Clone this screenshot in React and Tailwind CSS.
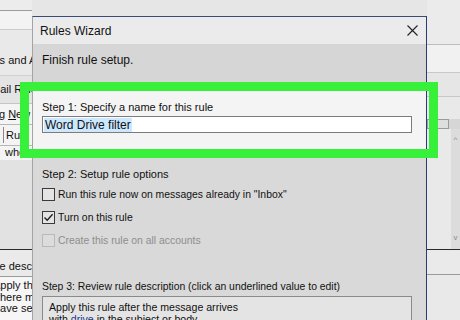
import React from "react";

const Check = ({ checked, disabled, label }) => (
  <div className="h-[23px] flex items-center gap-[3px]">
    <div
      className={`w-[13px] h-[13px] border flex items-center justify-center ${
        disabled ? "border-[#b9b9b9] bg-[#dcdcdc]" : "border-[#3a3a3a] bg-[#e4e4e4]"
      }`}
    >
      {checked && (
        <svg width="11" height="11" viewBox="0 0 11 11">
          <path d="M1.5 5.5 L4.2 8.3 L9.6 2.2" fill="none" stroke="#1a1a1a" strokeWidth="1.3" />
        </svg>
      )}
    </div>
    <span className={`text-[10.4px] ${disabled ? "text-[#8e8e8e]" : "text-[#111]"}`}>{label}</span>
  </div>
);

export default function App() {
  return (
    <div className="relative w-[460px] h-[320px] overflow-hidden flex items-start bg-[#e6e6e6] font-['Liberation_Sans',Arial,sans-serif] text-[11px] leading-[14px] text-[#111]">
      {/* Outlook window behind, left side */}
      <div className="w-[32px] h-[320px] shrink-0 flex flex-col overflow-hidden whitespace-nowrap">
        <div className="h-[11px] shrink-0 bg-[#ececec] border-b border-[#9c9c9c]" />
        <div className="h-[19px] shrink-0 bg-[#f3f3f3] border-b border-[#cdcdcd]" />
        <div className="h-[45px] shrink-0 bg-[#e9e9e9] pt-[23px] -ml-[23px]">Rules and Alerts</div>
        <div className="h-[28px] shrink-0 bg-[#e4e4e4] border-t border-[#d2d2d2] pt-[6px] -ml-[20px]">E-mail Rules</div>
        <div className="h-[21px] shrink-0 bg-[#f4f4f4] border-t border-[#c4c4c4] flex items-center">
          <span className="-ml-[1px]">g</span>
          <span className="ml-[3px]">
            <span className="underline">N</span>ew Rule
          </span>
        </div>
        <div className="h-[22px] shrink-0 bg-[#f4f4f4] border-y border-[#b8b8b8] flex items-center">
          <span className="ml-[3px] border-l border-[#888] h-[16px]" />
          <span className="ml-[2px]">Rule (a</span>
        </div>
        <div className="h-[14px] shrink-0 bg-[#f4f4f4] pl-[5px] leading-[12px]">when</div>
        <div className="h-[90px] shrink-0 bg-[#e2e2e2] border-b border-[#2a2a2a]" />
        <div className="h-[27px] shrink-0 bg-[#eaeaea] border-b border-[#9a9a9a] pt-[9px] -ml-[17px]">Rule description</div>
        <div className="flex-1 bg-[#f6f6f6] pt-[3px] leading-[11.5px]">
          <div className="-ml-[7px]">Apply this</div>
          <div className="-ml-[8px]">where m</div>
          <div className="-ml-[6px]">have sent</div>
        </div>
      </div>

      {/* Rules Wizard dialog */}
      <div className="w-[395px] h-[304px] shrink-0 mt-[16px] flex flex-col overflow-hidden bg-[#d9d9d9] border-l border-t border-r border-l-[#a4a4a4] border-t-[#3c4a78] border-r-[#2c3a72]">
        <div className="h-[27px] shrink-0 bg-[#ebebeb] flex items-center justify-between pl-[7px] pr-[8px] text-[12px]">
          <span>Rules Wizard</span>
          <svg width="11" height="11" viewBox="0 0 11 11">
            <path d="M0.5 0.5 L10.5 10.5 M10.5 0.5 L0.5 10.5" stroke="#222" strokeWidth="1.1" />
          </svg>
        </div>
        <div className="h-[38px] shrink-0 bg-[#d6d6d6] pl-[9px] pt-[9px] text-[12px]">Finish rule setup.</div>
        <div className="h-[76px] shrink-0 bg-[#f4f4f4] pl-[9px] pt-[18px]">
          <div>Step 1: Specify a name for this rule</div>
          <div className="mt-[2px] w-[370px] h-[17px] bg-white border border-[#7c7c7c] flex items-center px-[1px]">
            <span className="bg-[#cce8ff] px-[1px] leading-[14px] text-[12px]">Word Drive filter</span>
          </div>
        </div>
        <div className="shrink-0 pl-[9px] pt-[9px]">
          <div>Step 2: Setup rule options</div>
          <div className="mt-[2px]">
            <Check label={'Run this rule now on messages already in "Inbox"'} />
            <Check checked label="Turn on this rule" />
            <Check disabled label="Create this rule on all accounts" />
          </div>
          <div className="mt-[28px] text-[10.4px]">Step 3: Review rule description (click an underlined value to edit)</div>
          <div className="mt-[2px] w-[370px] h-[40px] bg-[#e4e4e4] border border-[#8a8a8a] pl-[6px] pt-[4px] leading-[12px] text-[10.6px]">
            <div>Apply this rule after the message arrives</div>
            <div>
              with <span className="text-[#1d3b8f] underline">drive</span> in the subject or body
            </div>
          </div>
        </div>
      </div>

      {/* Outlook window behind, right side */}
      <div className="flex-1 h-[320px] flex flex-col">
        <div className="h-[45px] shrink-0 bg-[#ebebeb] border-b border-[#bdbdbd]" />
        <div className="h-[28px] shrink-0 bg-[#f1f1f1] border-b border-[#c8c8c8]" />
        <div className="h-[24px] shrink-0 bg-[#e6e6e6] border-b border-[#c8c8c8]" />
        <div className="h-[22px] shrink-0 bg-[#e9e9e9]" />
        <div className="h-[10px] shrink-0 flex">
          <div className="w-[22px] border border-[#9a9a9a] bg-[#dedede]" />
          <div className="flex-1 bg-[#d6d6d6]" />
        </div>
        <div className="h-[121px] shrink-0 flex border-b border-[#2a2a2a]">
          <div className="w-[24px] bg-[#e9e9e9]" />
          <div className="flex-1 bg-[#dcdcdc] flex flex-col justify-between items-center py-[4px] text-[8px] text-[#888]">
            <span>^</span>
            <span>v</span>
          </div>
        </div>
        <div className="h-[25px] shrink-0 bg-[#eaeaea] border-b border-[#9a9a9a]" />
        <div className="flex-1 bg-[#e9e9e9]" />
      </div>

      {/* green highlight */}
      <div className="absolute left-[20px] top-[82px] w-[418px] h-[76px] border-[9px] border-[#36f03a]" />
    </div>
  );
}
